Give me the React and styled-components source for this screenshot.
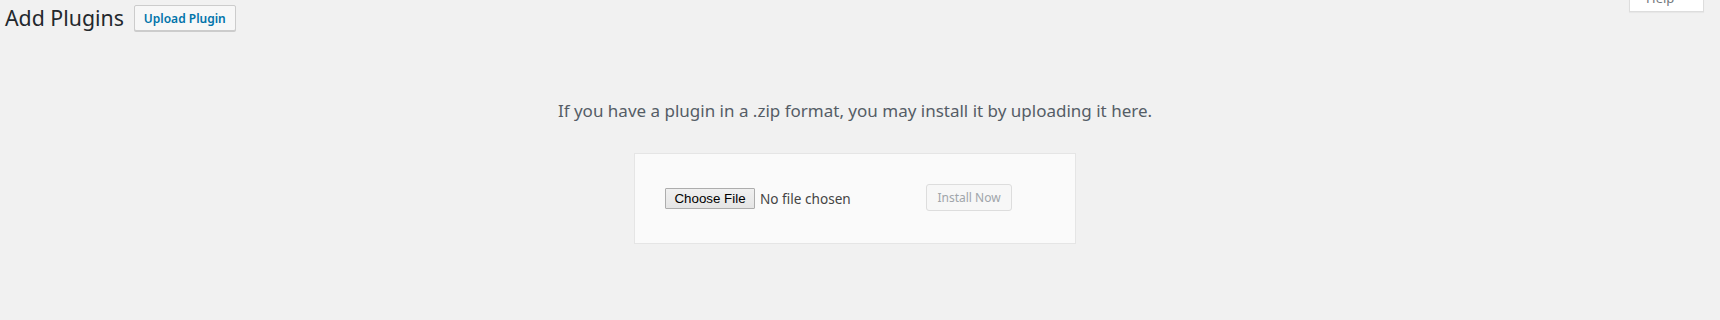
import React from "react";
import styled, { createGlobalStyle } from "styled-components";

const GlobalStyle = createGlobalStyle`
  html, body {
    margin: 0;
    padding: 0;
    background: #f1f1f1;
  }
  body {
    font-family: "Noto Sans", "Open Sans", sans-serif;
    color: #23282d;
    overflow: hidden;
  }
`;

const Page = styled.div`
  position: relative;
  width: 1720px;
  height: 320px;
`;

const Wrap = styled.div`
  margin-right: 10px;
`;

const HeaderRow = styled.div`
  display: flex;
  align-items: center;
  gap: 10px;
  padding: 5px 0 0 5px;
`;

const Title = styled.h1`
  margin: 0;
  font-size: 21.3px;
  font-weight: 400;
  line-height: 26px;
  color: #23282d;
`;

const TitleAction = styled.button`
  height: 26px;
  padding: 0 9px;
  border: 1px solid #ccc;
  border-radius: 2px;
  background: #f7f7f7;
  box-shadow: 0 1px 0 #ccc;
  color: #0073aa;
  font-family: inherit;
  font-size: 12px;
  font-weight: 600;
  cursor: pointer;
`;

const HelpTab = styled.button`
  position: absolute;
  top: -16px;
  right: 16px;
  width: 75px;
  height: 28px;
  padding: 0 0 0 16px;
  display: flex;
  align-items: center;
  gap: 8px;
  border: 1px solid #ddd;
  border-top: none;
  background: #fff;
  box-shadow: 0 1px 1px rgba(0, 0, 0, 0.04);
  color: #72777c;
  font-family: inherit;
  font-size: 13px;
`;

const UploadArea = styled.div`
  display: flex;
  flex-direction: column;
  align-items: center;
  padding-top: 68px;
`;

const HelpText = styled.p`
  margin: 0;
  font-size: 17px;
  line-height: 24px;
  color: #555d66;
`;

const UploadForm = styled.form`
  box-sizing: border-box;
  width: 442px;
  margin-top: 30px;
  padding: 30px;
  min-height: 91px;
  display: flex;
  align-items: center;
  background: #fafafa;
  border: 1px solid #e5e5e5;
`;

const FileField = styled.div`
  width: 261px;
  display: flex;
  align-items: center;
  gap: 5px;
`;

const ChooseButton = styled.span`
  box-sizing: border-box;
  width: 90px;
  height: 21px;
  display: flex;
  align-items: center;
  justify-content: center;
  border: 1px solid #adadad;
  border-radius: 1px;
  background: linear-gradient(#f0f0f0, #e5e5e5);
  color: #000;
  font-family: "Liberation Sans", Arial, sans-serif;
  font-size: 13.33px;
`;

const FileName = styled.span`
  font-size: 13.6px;
  color: #444;
`;

const SubmitButton = styled.button`
  box-sizing: border-box;
  align-self: flex-start;
  height: 27px;
  width: 86px;
  padding: 0 10px;
  border: 1px solid #ddd;
  border-radius: 3px;
  background: #f7f7f7;
  color: #a0a5aa;
  font-family: inherit;
  font-size: 12px;
`;

const Caret = () => (
  <svg width="8" height="6" viewBox="0 0 8 6">
    <path d="M0 1 L4 5 L8 1 Z" fill="#a0a5aa" />
  </svg>
);

export default function App() {
  return (
    <Page>
      <GlobalStyle />
      <HelpTab>
        Help <Caret />
      </HelpTab>
      <Wrap>
        <HeaderRow>
          <Title>Add Plugins</Title>
          <TitleAction>Upload Plugin</TitleAction>
        </HeaderRow>
        <UploadArea>
          <HelpText>
            If you have a plugin in a .zip format, you may install it by uploading it here.
          </HelpText>
          <UploadForm onSubmit={(e) => e.preventDefault()}>
            <FileField>
              <ChooseButton>Choose File</ChooseButton>
              <FileName>No file chosen</FileName>
            </FileField>
            <SubmitButton disabled>Install Now</SubmitButton>
          </UploadForm>
        </UploadArea>
      </Wrap>
    </Page>
  );
}
